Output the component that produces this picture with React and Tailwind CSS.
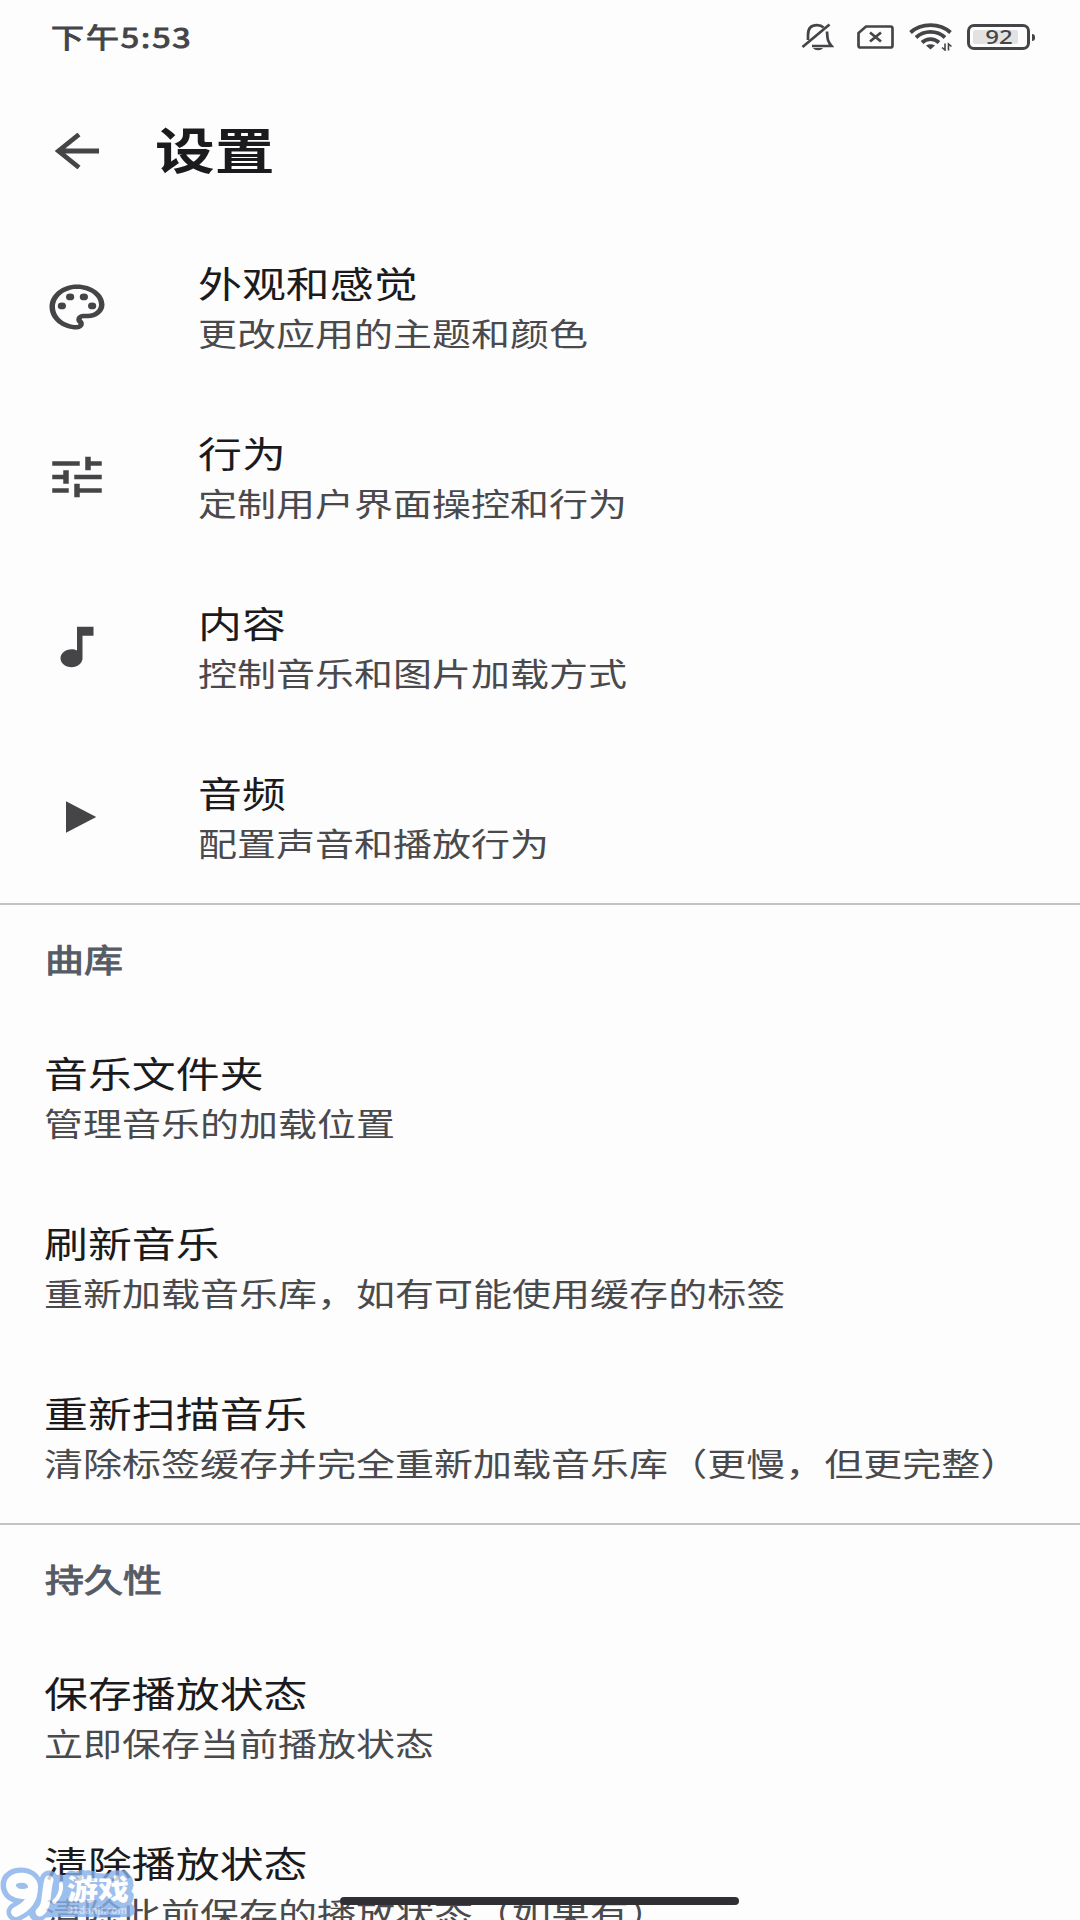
import React from 'react';

const DARK = '#454547';

// Material icons on a 24 unit grid, stretched to the row's icon box
const PaletteIcon = () => (
  <svg viewBox="0 0 24 24" preserveAspectRatio="none" className="w-[66px] h-[54px]" fill={DARK}>
    <path d="M12 22C6.49 22 2 17.51 2 12S6.49 2 12 2s10 4.04 10 9c0 3.31-2.69 6-6 6h-1.77c-.28 0-.5.22-.5.5 0 .12.05.23.13.33.41.47.64 1.06.64 1.67A2.5 2.5 0 0 1 12 22zm0-18c-4.41 0-8 3.59-8 8s3.59 8 8 8c.28 0 .5-.22.5-.5a.54.54 0 0 0-.14-.35c-.41-.46-.63-1.05-.63-1.65a2.5 2.5 0 0 1 2.5-2.5H16c2.21 0 4-1.79 4-4 0-3.86-3.59-7-8-7z" />
    <circle cx="6.5" cy="11.5" r="1.5" />
    <circle cx="9.5" cy="7.5" r="1.5" />
    <circle cx="14.5" cy="7.5" r="1.5" />
    <circle cx="17.5" cy="11.5" r="1.5" />
  </svg>
);

const TuneIcon = () => (
  <svg viewBox="0 0 24 24" preserveAspectRatio="none" className="w-[66px] h-[54px]" fill={DARK}>
    <path d="M3 17v2h6v-2H3zM3 5v2h10V5H3zm10 16v-2h8v-2h-8v-2h-2v6h2zM7 9v2H3v2h4v2h2V9H7zm14 4v-2H11v2h10zm-6-4h2V7h4V5h-4V3h-2v6z" />
  </svg>
);

const NoteIcon = () => (
  <svg viewBox="0 0 24 24" preserveAspectRatio="none" className="w-[66px] h-[54px]" fill={DARK}>
    <path d="M12 3v10.55c-.59-.34-1.27-.55-2-.55-2.21 0-4 1.79-4 4s1.79 4 4 4 4-1.79 4-4V7h4V3h-6z" />
  </svg>
);

const PlayIcon = () => (
  <svg viewBox="0 0 24 24" preserveAspectRatio="none" className="w-[66px] h-[54px]" fill={DARK}>
    <path d="M8 5v14l11-7z" />
  </svg>
);

const mainItems = [
  { title: '外观和感觉', desc: '更改应用的主题和颜色', icon: PaletteIcon },
  { title: '行为', desc: '定制用户界面操控和行为', icon: TuneIcon },
  { title: '内容', desc: '控制音乐和图片加载方式', icon: NoteIcon },
  { title: '音频', desc: '配置声音和播放行为', icon: PlayIcon },
];

const sections = [
  {
    name: '曲库',
    items: [
      { title: '音乐文件夹', desc: '管理音乐的加载位置' },
      { title: '刷新音乐', desc: '重新加载音乐库，如有可能使用缓存的标签' },
      { title: '重新扫描音乐', desc: '清除标签缓存并完全重新加载音乐库（更慢，但更完整）' },
    ],
  },
  {
    name: '持久性',
    items: [
      { title: '保存播放状态', desc: '立即保存当前播放状态' },
      { title: '清除播放状态', desc: '清除此前保存的播放状态（如果有）' },
    ],
  },
];

function SettingRow({ title, desc, icon: Icon }) {
  return (
    <div className="h-[170px] shrink-0 flex items-center pl-[44px]">
      {Icon && (
        <div className="w-[154px] shrink-0">
          <Icon />
        </div>
      )}
      <div className="flex flex-col items-start whitespace-nowrap">
        <p className="text-[36px] leading-[50px] text-[#1b1b1d] origin-left scale-x-[1.22]">{title}</p>
        <p className="text-[32px] leading-[50px] text-[#4a4a4d] origin-left scale-x-[1.219]">{desc}</p>
      </div>
    </div>
  );
}

function StatusBar() {
  return (
    <div className="h-[74px] shrink-0 flex items-center justify-between pl-[51px] pr-[45px] text-[#454547]">
      <span className="text-[27px] leading-[40px] font-normal [-webkit-text-stroke:1px_#454547] tracking-[1.6px] origin-left scale-x-[1.22] pb-px">下午5:53</span>
      <div className="flex items-center">
        {/* Muted bell */}
        <svg viewBox="0 0 33 28" className="w-[33px] h-[28px] mr-[23px]" fill="none" stroke={DARK} strokeWidth="2.7">
          <path d="M7 17V12C7 5 11 2.2 16 2.2c3 0 5 .8 6.6 2.2M26 8.5c.4 7 .4 10 4.5 14.500H11" />
          <path d="M1.500 24 28.500 1.500" />
          <path d="M12 25h10c-2 3-8 3-10 0z" fill={DARK} stroke="none" />
        </svg>
        {/* No SIM */}
        <svg viewBox="0 0 37 24" className="w-[37px] h-[24px] mr-[15px]" fill="none" stroke={DARK} strokeWidth="2.7">
          <path d="M9 1.500h24.500q2 0 2 2v17q0 2-2 2h-30q-2 0-2-2V8z" />
          <path d="M13 7.500l11 9M24 7.500l-11 9" />
        </svg>
        {/* Wifi */}
        <svg viewBox="0 0 43 28" className="w-[43px] h-[28px] mr-[15px]" fill="none" stroke={DARK} strokeWidth="3.8">
          <path d="M1.500 9.500C12-.4 31-.4 41.500 9.500M7 14.500c8-7.500 21-7.500 29 0M13 19.500c5-4.500 12-4.500 17 0" />
          <path d="M17 22.500q4.500-2.500 9 0l-4.500 4z" fill={DARK} stroke="none" />
          <path d="M36 20.500v6.500l-3-2.500M39.500 27.500v-6.500l3 2.500" strokeWidth="1.6" />
        </svg>
        {/* Battery */}
        <div className="w-[63px] h-[26px] border-[3px] border-[#454547] rounded-[7px] p-[3px] flex">
          <div className="w-[45px] bg-[#e2e2e3] rounded-[2px] flex items-center justify-center">
            <span className="text-[20px] leading-none font-medium font-['Noto_Sans'] scale-x-[1.2] pl-[5px]">92</span>
          </div>
        </div>
        <div className="w-[3px] h-[7px] bg-[#454547] rounded-r-sm ml-[2px]"></div>
      </div>
    </div>
  );
}

function Watermark() {
  return (
    <svg viewBox="0 0 136 54" className="absolute left-0 bottom-0 w-[136px] h-[54px]">
      <g opacity="0.8" fontFamily="Noto Sans CJK SC, sans-serif" fontWeight="900" strokeLinejoin="round" strokeLinecap="round">
        <g fill="none" stroke="#86b0ea">
          <path d="M33 22c0 9-23 10-23-3C10 8 33 8 33 21c0 13-6 20-17 25M49 14c-4 14-1 26-11 32M60 18c0 12-5 18-12 24" strokeWidth="19" />
          <text x="67" y="34" fontSize="28" fill="#86b0ea" strokeWidth="10" textLength="62" lengthAdjust="spacingAndGlyphs">游戏</text>
          <path d="M50 44h78" strokeWidth="14" />
        </g>
        <g fill="none" stroke="#fff">
          <path d="M33 22c0 8-22 9-22-3C11 9 33 9 33 21c0 13-6 20-17 25" strokeWidth="10" />
          <path d="M49 14c-4 14-1 26-9 32" strokeWidth="9" />
          <path d="M61 18c1 9-3 14-7 18" strokeWidth="4" />
        </g>
        <text x="67" y="34" fontSize="28" fill="#fff" textLength="62" lengthAdjust="spacingAndGlyphs">游戏</text>
        <text x="67" y="48" fontSize="10" fontWeight="700" fill="#c5daf6" textLength="60" lengthAdjust="spacingAndGlyphs">91danji.com</text>
      </g>
    </svg>
  );
}

export default function App() {
  return (
    <div className="relative w-[1080px] h-[1920px] overflow-hidden bg-[#fdfdfe] flex flex-col font-['Noto_Sans_CJK_SC',sans-serif]">
      <StatusBar />

      {/* App bar */}
      <header className="h-[148px] shrink-0 flex items-start pt-[42px] pl-[55px]">
        <svg viewBox="0 0 45 36" className="w-[45px] h-[36px] mt-[17px]" fill="none" stroke="#454547" strokeWidth="4.8">
          <path d="M44 18H3M24 1.500 3.500 18l20.500 16.500" />
        </svg>
        <h1 className="-mt-[3px] ml-[55px] text-[49px] leading-[70px] font-bold text-[#1b1b1d] origin-left scale-x-[1.22]">设置</h1>
      </header>

      <div className="shrink-0 pb-px">
        {mainItems.map((item) => (
          <SettingRow key={item.title} {...item} />
        ))}
      </div>

      {sections.map((section) => (
        <section key={section.name} className="shrink-0 pb-px border-t-2 border-[#c3c3c6]">
          <div className="h-[107px] flex items-center pl-[45px] pb-[2px]">
            <h2 className="text-[32px] font-normal [-webkit-text-stroke:1px_#565c66] text-[#565c66] origin-left scale-x-[1.218]">{section.name}</h2>
          </div>
          {section.items.map((item) => (
            <SettingRow key={item.title} {...item} />
          ))}
        </section>
      ))}

      <Watermark />

      {/* Gesture bar */}
      <div className="absolute left-[340px] bottom-[15px] w-[399px] h-[8px] rounded-full bg-[#303034]"></div>
    </div>
  );
}
